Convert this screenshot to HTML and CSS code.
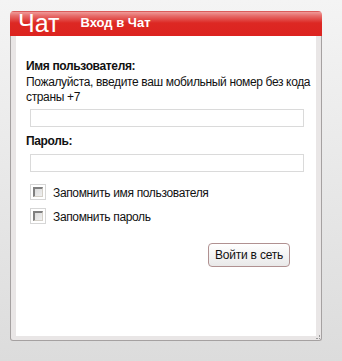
FILE: index.html
```html
<!DOCTYPE html>
<html lang="ru">
<head>
    <meta charset="UTF-8">
    <title>Чат</title>
    <link rel="stylesheet" href="styles.css">
</head>
<body>
    <div class="window">
        <div class="window-header">
            <span class="logo">Чат</span>
            <span class="title">Вход в Чат</span>
        </div>
        <div class="window-frame">
            <form class="login-form">
                <label class="field-label" for="username">Имя пользователя:</label>
                <p class="hint">Пожалуйста, введите ваш мобильный номер без кода страны +7</p>
                <input type="text" id="username" class="field">
                <label class="field-label" for="password">Пароль:</label>
                <input type="password" id="password" class="field">

                <div class="remember">
                    <label class="check-row"><span class="check"></span>Запомнить имя пользователя</label>
                    <label class="check-row"><span class="check"></span>Запомнить пароль</label>
                </div>

                <div class="actions">
                    <button type="button" class="btn">Войти в сеть</button>
                </div>
            </form>
            <span class="grip"></span>
        </div>
    </div>
</body>
</html>
```

FILE: styles.css
```css
html, body {
    height: 100%;
}
body {
    margin: 0;
    padding: 11px 0 0 10px;
    box-sizing: border-box;
    font-family: "Liberation Sans", Arial, sans-serif;
    font-size: 12px;
    letter-spacing: -0.35px;
    color: #111;
    background: linear-gradient(#f4f4f4, #dcdcdc);
}
.window {
    width: 312px;
}
.window-header {
    height: 25px;
    display: flex;
    align-items: flex-end;
    border-radius: 4px 4px 0 0;
    background: linear-gradient(#c81c1c 0, #ef9a98 1px, #e66a68 5px, #dd2823 12px, #dc231f 100%);
    color: #fff;
}
.logo {
    font-size: 25px;
    line-height: 25px;
    margin-left: 8px;
    letter-spacing: 0;
}
.title {
    font-weight: bold;
    font-size: 13px;
    letter-spacing: 0;
    margin: 0 0 6px 21px;
}
.window-frame {
    position: relative;
    height: 300px;
    border: 1px solid #a5a1a1;
    border-top: none;
    border-radius: 0 0 3px 3px;
    background: #e9e6e6;
    padding: 0 5px 4px 5px;
}
.login-form {
    background: #fff;
    height: 100%;
    padding: 23px 2px 0 10px;
    box-sizing: border-box;
}
.field-label {
    display: block;
    font-weight: bold;
    font-size: 12px;
    line-height: 14px;
}
.hint {
    margin: 2px 0 4px;
    line-height: 15px;
}
.field {
    display: block;
    width: 274px;
    height: 18px;
    box-sizing: border-box;
    margin: 0 0 7px 4px;
    border: 1px solid #dadada;
    background: #fff;
}
.field-label + .field {
    margin-top: 6px;
}
.remember {
    margin-top: 12px;
    display: flex;
    flex-direction: column;
    gap: 8px;
}
.check-row {
    display: flex;
    align-items: flex-end;
    gap: 7px;
    margin-left: 4px;
    line-height: 14px;
}
.check {
    flex: none;
    width: 16px;
    height: 16px;
    box-sizing: border-box;
    border: 1px solid #d6d6d6;
    padding: 2px;
    background: #fff;
}
.check::before {
    content: "";
    display: block;
    width: 100%;
    height: 100%;
    box-sizing: border-box;
    border-top: 2px solid #808080;
    border-left: 2px solid #808080;
    border-right: 1px solid #d4d0c8;
    border-bottom: 1px solid #d4d0c8;
    background: linear-gradient(135deg, #dcdcdc, #f0f0f0);
}
.actions {
    display: flex;
    justify-content: flex-end;
    margin: 19px 24px 0 0;
}
.btn {
    width: 82px;
    height: 24px;
    font-family: inherit;
    font-size: 12px;
    letter-spacing: -0.2px;
    color: #111;
    border: 1px solid #b09191;
    border-radius: 4px;
    background: linear-gradient(#fff, #e9e9e9);
    padding: 0;
}
.grip {
    position: absolute;
    right: 1px;
    bottom: 1px;
    width: 3px;
    height: 3px;
    border-right: 1px dotted #999;
    border-bottom: 1px dotted #999;
}
```
